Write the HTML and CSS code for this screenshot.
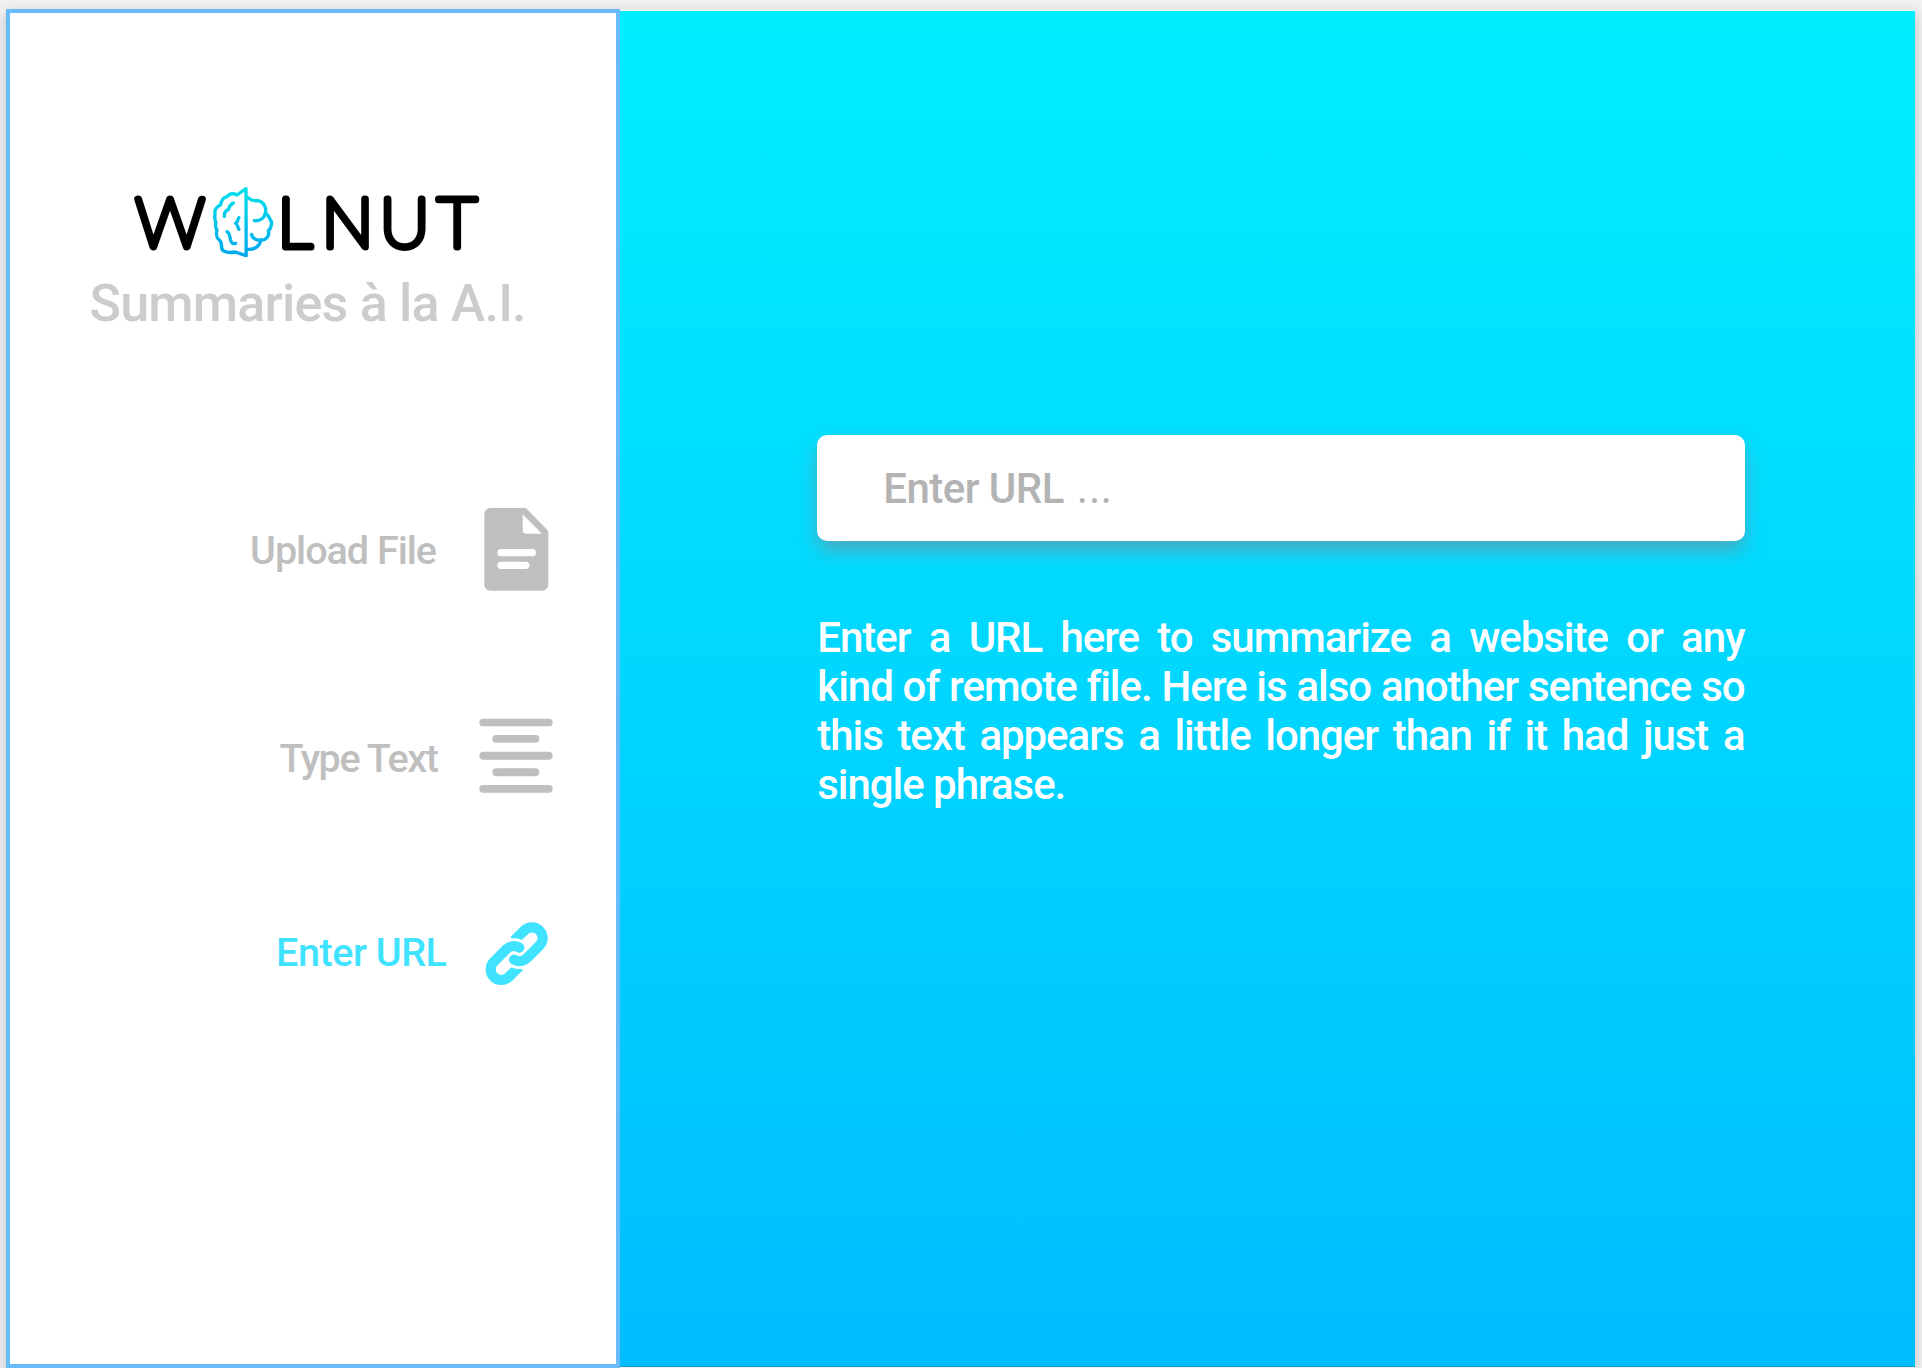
FILE: index.html
```html
<!DOCTYPE html>
<html lang="en">
<head>
<meta charset="utf-8">
<title>Walnut</title>
<link rel="stylesheet" href="styles.css">
</head>
<body>
<div class="artboard">
  <aside class="sidebar">
    <svg class="logo" viewBox="0 0 360 76" role="img" aria-label="Walnut">
      <defs>
        <linearGradient id="brain" gradientUnits="userSpaceOnUse" x1="0" y1="50" x2="0" y2="262">
          <stop offset="0" stop-color="#00e2ea"/>
          <stop offset="1" stop-color="#00a6ee"/>
        </linearGradient>
      </defs>
      <text class="wordmark" x="5.5 147.500 191.8 249.8 307.6" y="62.4">WLNUT</text>
      <g class="brain" transform="scale(.33333) translate(-150 -45)" stroke="url(#brain)">
        <path d="M498 56 498.5 257 466 246C448 250 426 246 425 234 425 222 424 214 417 209 408 203 409 188 411 181 407 174 404 168 408 158 403 150 404 140 405 131 402 118 414 108 422 104 424 92 430 82 441 80 450 70 460 69 471 75Z"/>
        <path d="M502 81C512 92 524 93 534 92 550 95 561 112 556 130 566 134 568 145 575 157 573 167 575 175 565 182 570 198 557 212 542 210 541 228 523 240 502 238"/>
        <path d="M556 130C553 144 540 154 523 152M542 210C530 212 516 205 515 193"/>
        <path d="M460 99C455 102 447 108 446 118 438 121 432 128 433 139M477 143C473 145 476 154 467 160 475 167 473 175 477 178M441 185C451 190 448 200 452 211 454 220 460 222 467 220"/>
      </g>
    </svg>
    <p class="tagline">Summaries à la A.I.</p>
    <nav class="menu">
      <a class="item upload">
        <span class="label">Upload File</span>
        <svg class="icon" viewBox="702 54 252 252">
          <path d="M751 54H858L925 123V284a18 18 0 0 1-18 18H751a18 18 0 0 1-18-18V72a18 18 0 0 1 18-18Z"/>
          <g fill="#fff">
            <path d="M848 73 906 131H858a10 10 0 0 1-10-10Z"/>
            <rect x="772" y="177" width="116" height="22" rx="11"/>
            <rect x="772" y="215" width="96" height="22" rx="11"/>
          </g>
        </svg>
      </a>
      <a class="item type">
        <span class="label">Type Text</span>
        <svg class="icon" viewBox="702 42 252 252">
          <rect x="718" y="56" width="220" height="23" rx="11"/>
          <rect x="757" y="105" width="141" height="23" rx="11"/>
          <rect x="718" y="155" width="220" height="24" rx="12"/>
          <rect x="757" y="205" width="141" height="24" rx="12"/>
          <rect x="718" y="255" width="220" height="23" rx="11"/>
        </svg>
      </a>
      <a class="item url active">
        <span class="label">Enter URL</span>
        <svg class="icon" viewBox="702 36 252 252">
          <g class="chain">
            <path d="M822 122 854.4 90.4M838 200 805.6 231.6"/>
            <path class="gap" d="M799 149.500A32 32 0 0 1 838 143M861 172.500A32 32 0 0 1 822 179"/>
            <path class="round" d="M822 179A32 32 0 0 0 861.6 173.600L899.600 135.600A32 32 0 0 0 854.400 90.400L852 92.800"/>
            <path class="round" d="M838 143A32 32 0 0 0 798.400 148.400L760.400 186.400A32 32 0 0 0 805.600 231.600L808 229.200"/>
          </g>
        </svg>
      </a>
    </nav>
  </aside>
  <main class="main">
    <div class="field">Enter URL <span class="dots">…</span></div>
    <p class="help">Enter a URL here to summarize a website or any kind of remote file. Here is also another sentence so this text appears a little longer than if it had just a single phrase.</p>
  </main>
</div>
</body>
</html>
```
FILE: styles.css
```css
* { box-sizing: border-box; }

body {
  margin: 0;
  height: 1368px;
  padding: 9px 7px 0 6px;
  overflow: hidden;
  background: #f1f1f1;
  font-family: Roboto, "Liberation Sans", sans-serif;
  font-weight: 500;
}

.artboard {
  display: flex;
  align-items: flex-start;
  height: 1359px;
  box-shadow: 0 4px 12px rgba(0, 0, 0, .22);
}

.sidebar {
  width: 614px;
  height: 1359px;
  flex: none;
  padding: 172px 58px 0 0;
  background: #fff;
  border: 4px solid #69bcfa;
}

.logo {
  display: block;
  width: 360px;
  height: 76px;
  margin-left: 120px;
  overflow: visible;
}

.wordmark {
  font-family: Lato, sans-serif;
  font-size: 69px;
  font-weight: 100;
  fill: #000;
  stroke: #000;
  stroke-width: 7px;
  stroke-linejoin: round;
}

.brain {
  fill: none;
  stroke-width: 10px;
  stroke-linejoin: round;
  stroke-linecap: round;
}

.tagline {
  margin: 13px 0 0 79.500px;
  font-size: 52px;
  line-height: 60px;
  letter-spacing: -.8px;
  white-space: nowrap;
  color: #ccc;
}

.menu {
  display: flex;
  flex-direction: column;
  padding-top: 174px;
}

.item {
  display: flex;
  justify-content: flex-end;
  align-items: center;
  height: 84px;
  color: #bfbfbf;
}

.label {
  font-size: 39.5px;
  line-height: 48px;
  white-space: nowrap;
}

.icon {
  width: 84px;
  height: 84px;
  fill: currentColor;
}

.upload { gap: 38px; letter-spacing: -1px; }
.upload .label { padding-top: 2px; }
.type { gap: 36.500px; margin-top: 122px; letter-spacing: -1.4px; }
.type .label { padding-top: 5px; }
.url { gap: 27.5px; margin-top: 114px; letter-spacing: -.45px; }
.url .label { padding-bottom: 3px; }
.active { color: #40e3ff; }

.chain {
  fill: none;
  stroke: currentColor;
  stroke-width: 30.5px;
}
.gap { stroke: #fff; stroke-width: 48px; }
.round { stroke-linecap: round; }

.main {
  flex: 1;
  height: 1356px;
  margin-top: 2px;
  padding: 424px 170.500px 0 197.300px;
  background: linear-gradient(#00efff, #00bdff);
  border-bottom: 1px solid #0a9fd4;
}

.field {
  height: 106px;
  padding-left: 66px;
  border-radius: 10px;
  background: #fff;
  box-shadow: 0 10px 20px -1px rgba(125, 140, 150, .65);
  font-size: 42px;
  line-height: 108px;
  letter-spacing: -.55px;
  white-space: pre;
  color: #b3b3b3;
}

.dots {
  margin-left: 1px;
  font-size: 61px;
  font-weight: 300;
  line-height: 1;
}

.help {
  margin: 71.500px 0 0;
  font-size: 42px;
  line-height: 49px;
  letter-spacing: -1.05px;
  text-align: justify;
  color: #fff;
}
```
